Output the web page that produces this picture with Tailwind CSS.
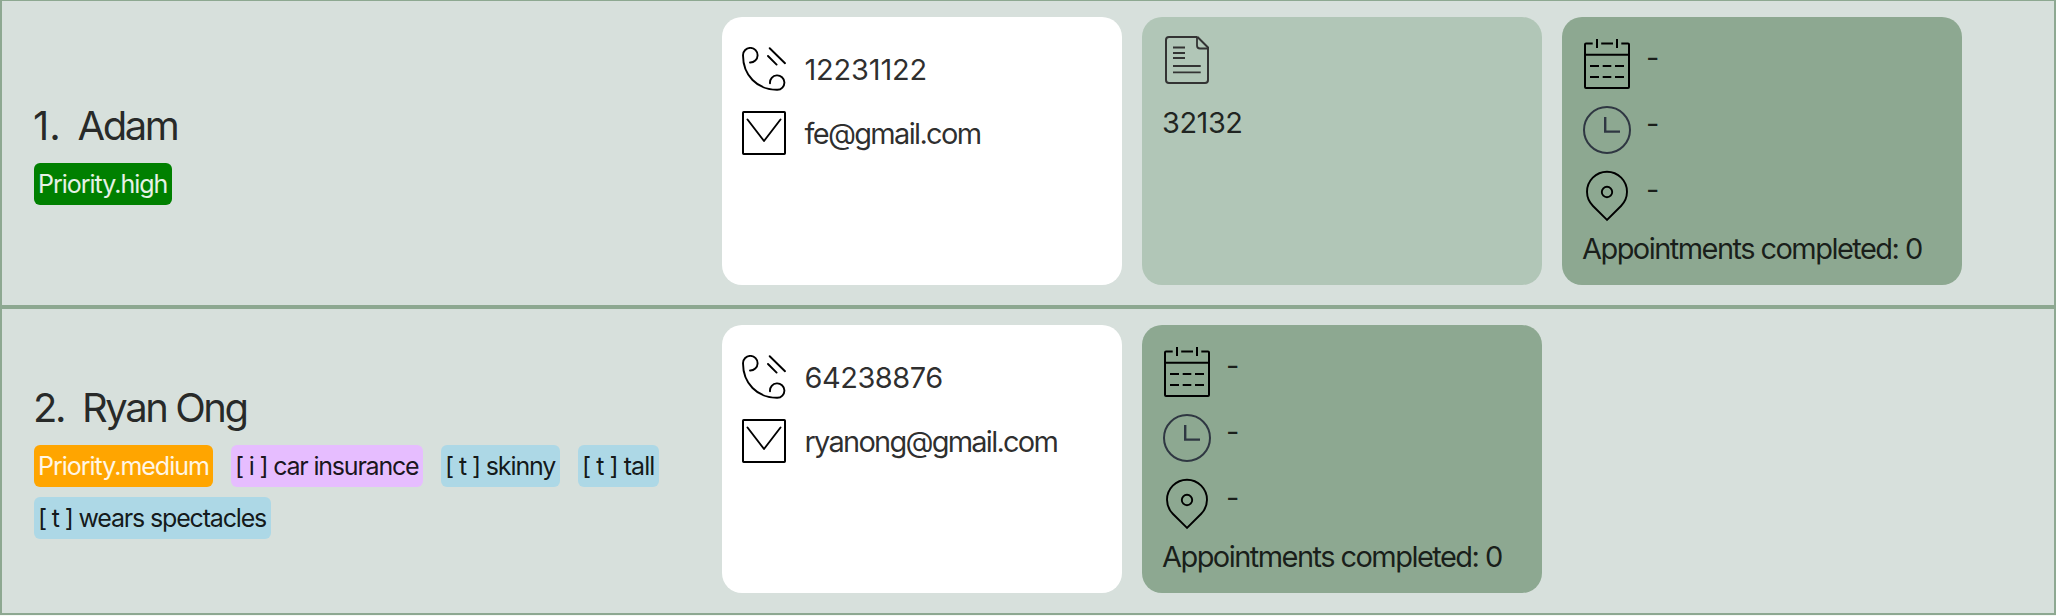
<!DOCTYPE html>
<html lang="en">
<head>
<meta charset="utf-8">
<title>Clients</title>
<script src="https://cdn.jsdelivr.net/npm/@tailwindcss/browser@4"></script>
</head>
<body class="bg-[#f4f8f4] overflow-hidden font-['Inter',sans-serif] text-black/83">
<svg class="hidden">
  <symbol id="phone" viewBox="6 7 44 44"><g fill="none" stroke="#000" stroke-width="1.9" stroke-linecap="round"><path d="M14 22.5A7.3 7.3 0 1 0 7 15.2C7 35 21 50 41.3 49.8A7.2 7.2 0 1 0 34 43.2"/><path d="M33.7 8.2L49 23.2M32 16L40.6 24.6"/></g></symbol>
  <symbol id="mail" viewBox="6 71 44 44"><g fill="none" stroke="#000" stroke-width="2" stroke-linecap="round" stroke-linejoin="round"><rect x="7" y="72" width="42" height="42" rx=".7"/><path stroke-width="1.9" d="M11.5 79.5L28 101L44.5 79.5"/></g></symbol>
  <symbol id="note" viewBox="3 6 48 50"><g fill="none" stroke="#333" stroke-width="2"><path d="M37.5 7H9Q6 7 6 10V50Q6 53 9 53H45Q48 53 48 50V17.5L37.5 7"/><path d="M37 7V15.5Q37 18.5 40 18.5H48" stroke-width="1.8"/><path d="M13 17.5H25M13 23H25M13 28H25M13 36H40.7M13 42.4H40.7" stroke-width="1.9"/></g></symbol>
  <symbol id="calendar" viewBox="6 3 50 54"><g fill="none" stroke="#000" stroke-width="2"><path d="M16.7 9.4H10Q9 9.4 9 10.4V53Q9 54 10 54H52Q53 54 53 53V10.4Q53 9.4 52 9.4H45.3M25.2 9.4H37M9 20.8H53M21 5V14M41 5V14"/><path d="M14 32H23M26.7 32H35.3M39 32H48M14 43H23M26.7 43H35.3M39 43H48" stroke-width="1.9"/></g></symbol>
  <symbol id="clock" viewBox="6 69 50 54"><g fill="none" stroke="#2f3742" stroke-width="2"><circle cx="31" cy="96" r="23"/><path d="M29.2 83V97.6H44" stroke-width="2.4"/></g></symbol>
  <symbol id="pin" viewBox="6 135 50 54"><g fill="none" stroke="#000" stroke-width="1.9"><path d="M31 185.9L17 172A20 20 0 1 1 45 172Z"/><circle cx="31" cy="158" r="5.2"/></g></symbol>
</svg>
<main class="-mt-px">
  <section class="flex h-[308px] items-center border-2 border-[#8da891] bg-[#d7e0dc]">
    <div class="flex w-[720px] shrink-0 flex-col gap-3.5 pl-8">
      <h2 class="flex h-12 text-[40px] leading-[49px] whitespace-nowrap"><span class="-ml-px w-[44.5px]">1.</span><span class="tracking-[-2.4px]">Adam</span></h2>
      <div class="flex w-[640px] flex-wrap gap-x-[18px] gap-y-2.5 text-[25px] leading-[43px] whitespace-nowrap">
        <span class="h-[42px] w-[138px] rounded-md bg-[#008000] pl-1 tracking-[-1.01px] text-white/90">Priority.high</span>
      </div>
    </div>
    <div class="flex gap-5 self-start pt-4 text-[29px] whitespace-nowrap">
      <article class="flex h-[268px] w-[400px] flex-col gap-5 rounded-[20px] bg-white pt-[30px] pl-5 leading-[45px]">
        <p class="flex h-11 gap-[18.5px]"><svg class="size-11"><use href="#phone"/></svg><span class="tracking-[-0.2px]">12231122</span></p>
        <p class="flex h-11 gap-[18.5px]"><svg class="size-11"><use href="#mail"/></svg><span class="tracking-[-1.68px]">fe@gmail.com</span></p>
      </article>
      <article class="h-[268px] w-[400px] rounded-[20px] bg-[#b1c6b7] pt-[19px] pl-[21px]">
        <svg class="block h-[50px] w-12"><use href="#note"/></svg>
        <p class="-ml-px pt-3.5 leading-[45px] tracking-[-0.5px]">32132</p>
      </article>
      <article class="h-[268px] w-[400px] rounded-[20px] bg-[#8da891] pt-5 pl-5">
        <p class="flex h-[66px] gap-3.5 leading-[42px]"><svg class="h-[54px] w-[50px]"><use href="#calendar"/></svg>-</p>
        <p class="flex h-[66px] gap-3.5 leading-[42px]"><svg class="h-[54px] w-[50px]"><use href="#clock"/></svg>-</p>
        <p class="flex h-14 gap-3.5 leading-[42px]"><svg class="h-[54px] w-[50px]"><use href="#pin"/></svg>-</p>
        <p class="leading-[47px] tracking-[-1.55px]">Appointments completed: 0</p>
      </article>
    </div>
  </section>
  <section class="flex h-[308px] items-center border-2 border-[#8da891] bg-[#d7e0dc]">
    <div class="flex w-[720px] shrink-0 flex-col gap-3.5 pl-8">
      <h2 class="flex h-12 text-[40px] leading-[49px] whitespace-nowrap"><span class="-ml-px w-[49px] tracking-[-2.4px]">2.</span><span class="tracking-[-2.44px]">Ryan Ong</span></h2>
      <div class="flex w-[640px] flex-wrap gap-x-[18px] gap-y-2.5 text-[25px] leading-[43px] whitespace-nowrap text-black/90">
        <span class="h-[42px] w-[179px] rounded-md bg-[#ffa500] pl-1 tracking-[-1.01px] text-white/90">Priority.medium</span>
        <span class="h-[42px] w-[192px] rounded-md bg-[#e6bdff] pl-1 tracking-[-1.2px]">[ i ] car insurance</span>
        <span class="h-[42px] w-[119px] rounded-md bg-[#add8e6] pl-1 tracking-[-1.12px]">[ t ] skinny</span>
        <span class="h-[42px] w-[81px] rounded-md bg-[#add8e6] pl-1 tracking-[-0.96px]">[ t ] tall</span>
        <span class="h-[42px] w-[237px] rounded-md bg-[#add8e6] pl-1 tracking-[-1.17px]">[ t ] wears spectacles</span>
      </div>
    </div>
    <div class="flex gap-5 self-start pt-4 text-[29px] whitespace-nowrap">
      <article class="flex h-[268px] w-[400px] flex-col gap-5 rounded-[20px] bg-white pt-[30px] pl-5 leading-[45px]">
        <p class="flex h-11 gap-[18.5px]"><svg class="size-11"><use href="#phone"/></svg><span class="tracking-[-0.5px]">64238876</span></p>
        <p class="flex h-11 gap-[18.5px]"><svg class="size-11"><use href="#mail"/></svg><span class="tracking-[-1.76px]">ryanong@gmail.com</span></p>
      </article>
      <article class="h-[268px] w-[400px] rounded-[20px] bg-[#8da891] pt-5 pl-5">
        <p class="flex h-[66px] gap-3.5 leading-[42px]"><svg class="h-[54px] w-[50px]"><use href="#calendar"/></svg>-</p>
        <p class="flex h-[66px] gap-3.5 leading-[42px]"><svg class="h-[54px] w-[50px]"><use href="#clock"/></svg>-</p>
        <p class="flex h-14 gap-3.5 leading-[42px]"><svg class="h-[54px] w-[50px]"><use href="#pin"/></svg>-</p>
        <p class="leading-[47px] tracking-[-1.55px]">Appointments completed: 0</p>
      </article>
    </div>
  </section>
</main>
</body>
</html>
